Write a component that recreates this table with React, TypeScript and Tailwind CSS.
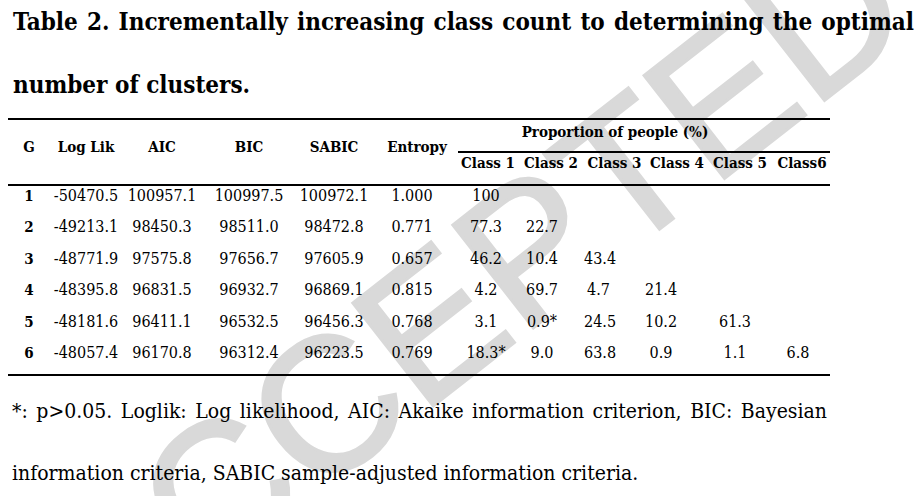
import React from "react";

const cols = "grid grid-cols-[42px_72px_80px_94px_76px_86px_60px_66px_61px_64px_62px_59px]";

const rows: string[][] = [
  ["1", "-50470.5", "100957.1", "100997.5", "100972.1", "1.000", "100", "", "", "", "", ""],
  ["2", "-49213.1", "98450.3", "98511.0", "98472.8", "0.771", "77.3", "22.7", "", "", "", ""],
  ["3", "-48771.9", "97575.8", "97656.7", "97605.9", "0.657", "46.2", "10.4", "43.4", "", "", ""],
  ["4", "-48395.8", "96831.5", "96932.7", "96869.1", "0.815", "4.2", "69.7", "4.7", "21.4", "", ""],
  ["5", "-48181.6", "96411.1", "96532.5", "96456.3", "0.768", "3.1", "0.9*", "24.5", "10.2", "61.3", ""],
  ["6", "-48057.4", "96170.8", "96312.4", "96223.5", "0.769", "18.3*", "9.0", "63.8", "0.9", "1.1", "6.8"],
];

const cellPad = [
  "font-bold text-[15px]",
  "",
  "",
  "",
  "",
  "pr-[6px]",
  "pr-[4px]",
  "pr-[18px]",
  "pr-[32px]",
  "pr-[32px]",
  "pr-[10px]",
  "pr-[5px]",
];

export default function App() {
  return (
    <div className="relative w-[919px] h-[496px] overflow-hidden bg-white text-black [font-family:DejaVu_Serif_Condensed,DejaVu_Serif,serif]">
      {/* watermark */}
      <div className="absolute left-[472px] top-[292px] -translate-x-1/2 -translate-y-1/2 -rotate-[38deg] whitespace-nowrap [font-family:Liberation_Sans,Arial,sans-serif] font-normal text-[190px] leading-none text-[#d9d9d9] [-webkit-text-stroke:3px_#d9d9d9] select-none">
        ACCEPTED
      </div>

      <div className="relative">
        <div className="-mt-[10px] pl-[13px] w-[914px] text-[24px] font-bold leading-[63px] whitespace-nowrap">
          <div className="text-justify [text-align-last:justify]">
            Table 2. Incrementally increasing class count to determining the optimal
          </div>
          <div>number of clusters.</div>
        </div>

        <div className="ml-[8px] mt-[2px] w-[822px]">
          {/* header */}
          <div className={`${cols} border-t-2 border-b-2 border-black text-[15px] font-bold leading-[20px]`}>
            <div className="row-span-2 pt-[17px] text-center">G</div>
            <div className="row-span-2 pt-[17px] text-center">Log Lik</div>
            <div className="row-span-2 pt-[17px] text-center">AIC</div>
            <div className="row-span-2 pt-[17px] text-center">BIC</div>
            <div className="row-span-2 pt-[17px] text-center">SABIC</div>
            <div className="row-span-2 pt-[17px] pl-[4px] text-center">Entropy</div>
            <div className="col-span-6 h-[33px] border-b-2 border-black pt-[2px] pr-[58px] text-center whitespace-nowrap">
              Proportion of people (%)
            </div>
            <div className="h-[31px] text-center whitespace-nowrap">Class 1</div>
            <div className="h-[31px] text-center whitespace-nowrap">Class 2</div>
            <div className="h-[31px] text-center whitespace-nowrap">Class 3</div>
            <div className="h-[31px] text-center whitespace-nowrap">Class 4</div>
            <div className="h-[31px] text-center whitespace-nowrap">Class 5</div>
            <div className="h-[31px] pl-[3px] text-center whitespace-nowrap">Class6</div>
          </div>

          {/* body */}
          <div className="border-b-2 border-black text-[16px] leading-[20px]">
            {rows.map((r, i) => (
              <div key={i} className={`${cols} h-[31.4px]`}>
                {r.map((v, j) => (
                  <div key={j} className={`text-center whitespace-nowrap ${cellPad[j]}`}>
                    {v}
                  </div>
                ))}
              </div>
            ))}
          </div>
        </div>

        <div className="mt-[4px] pl-[12px] w-[827px] text-[21px] leading-[62px] whitespace-nowrap">
          <div className="text-justify [text-align-last:justify]">
            *: p&gt;0.05. Loglik: Log likelihood, AIC: Akaike information criterion, BIC: Bayesian
          </div>
          <div>information criteria, SABIC sample-adjusted information criteria.</div>
        </div>
      </div>
    </div>
  );
}
